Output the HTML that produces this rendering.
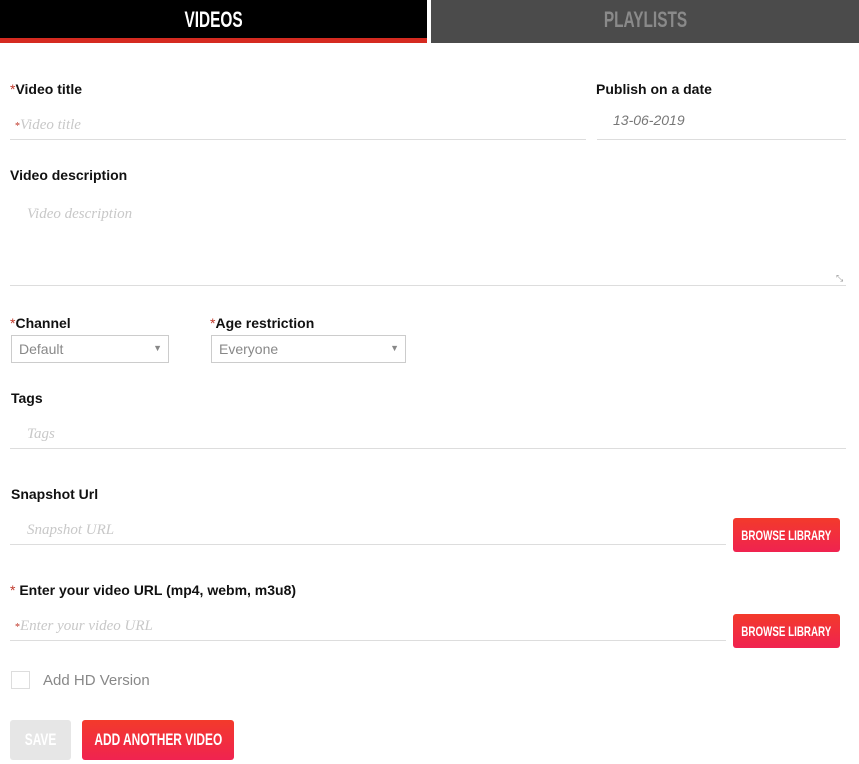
<!DOCTYPE html>
<html><head><style>
*{box-sizing:border-box;margin:0;padding:0}
body{width:859px;height:764px;background:#fff;font-family:"Liberation Sans",Arial,sans-serif;position:relative;overflow:hidden}
.a{position:absolute}
.cond{font-weight:bold;white-space:nowrap;display:flex;justify-content:center;align-items:center}
.cond span{display:block;flex:none;transform:scaleX(0.7);transform-origin:center}
.lbl{font-size:14px;font-weight:bold;color:#111}
.req{color:#c0392b;font-weight:normal}
.ph{font-family:"Liberation Serif",serif;font-style:italic;color:#c8c8c8;font-size:15px}
.line{height:1px;background:#ddd}
.btn{background:linear-gradient(#f33a2b,#f02350);border-radius:3px;color:#fff}
.sel{border:1px solid #ccc;height:28px;font-size:14px;color:#888;padding:5px 7px}
.sel span{position:absolute;right:6px;top:7px;font-size:9px;color:#888}
</style></head><body>
<div class="a" style="left:0;top:0;width:427px;height:38px;background:#000"></div>
<div class="a" style="left:0;top:38px;width:427px;height:5px;background:#d52a20"></div>
<div class="a cond" style="left:0;top:0;height:40px;width:427px;color:#fff;font-size:22px"><span>VIDEOS</span></div>
<div class="a" style="left:431px;top:0;width:428px;height:43px;background:#4b4b4b"></div>
<div class="a cond" style="left:431px;top:0;height:40px;width:428px;color:#8a8a8a;font-size:22px"><span>PLAYLISTS</span></div>

<div class="a lbl" style="left:10px;top:81px"><span class="req">*</span>Video title</div>
<div class="a ph" style="left:15px;top:117px"><span style="color:#c0392b;font-style:normal;font-size:10px">*</span>Video title</div>
<div class="a line" style="left:10px;top:139px;width:576px"></div>
<div class="a lbl" style="left:596px;top:81px">Publish on a date</div>
<div class="a" style="left:613px;top:112px;font-size:14px;font-style:italic;color:#777">13-06-2019</div>
<div class="a line" style="left:597px;top:139px;width:249px"></div>

<div class="a lbl" style="left:10px;top:167px">Video description</div>
<div class="a ph" style="left:27px;top:206px">Video description</div>
<div class="a line" style="left:10px;top:285px;width:836px"></div>
<div class="a" style="left:836px;top:273px;color:#999;font-size:9px">&#x2921;</div>

<div class="a lbl" style="left:10px;top:315px"><span class="req">*</span>Channel</div>
<div class="a sel" style="left:11px;top:335px;width:158px">Default<span>▼</span></div>
<div class="a lbl" style="left:210px;top:315px"><span class="req">*</span>Age restriction</div>
<div class="a sel" style="left:211px;top:335px;width:195px">Everyone<span>▼</span></div>

<div class="a lbl" style="left:11px;top:390px">Tags</div>
<div class="a ph" style="left:27px;top:426px">Tags</div>
<div class="a line" style="left:10px;top:448px;width:836px"></div>

<div class="a lbl" style="left:11px;top:486px">Snapshot Url</div>
<div class="a ph" style="left:27px;top:522px">Snapshot URL</div>
<div class="a line" style="left:10px;top:544px;width:716px"></div>
<div class="a btn cond" style="left:733px;top:518px;width:107px;height:34px;font-size:14px"><span>BROWSE LIBRARY</span></div>

<div class="a lbl" style="left:10px;top:582px"><span class="req">*</span> Enter your video URL (mp4, webm, m3u8)</div>
<div class="a ph" style="left:15px;top:618px"><span style="color:#c0392b;font-style:normal;font-size:10px">*</span>Enter your video URL</div>
<div class="a line" style="left:10px;top:640px;width:716px"></div>
<div class="a btn cond" style="left:733px;top:614px;width:107px;height:34px;font-size:14px"><span>BROWSE LIBRARY</span></div>

<div class="a" style="left:11px;top:671px;width:19px;height:18px;border:1px solid #ddd"></div>
<div class="a" style="left:43px;top:672px;font-size:15px;color:#888">Add HD Version</div>

<div class="a cond" style="left:10px;top:720px;width:61px;height:40px;background:#e6e6e6;border-radius:3px;color:#fff;font-size:17px"><span>SAVE</span></div>
<div class="a btn cond" style="left:82px;top:720px;width:152px;height:40px;font-size:17px"><span>ADD ANOTHER VIDEO</span></div>
</body></html>
